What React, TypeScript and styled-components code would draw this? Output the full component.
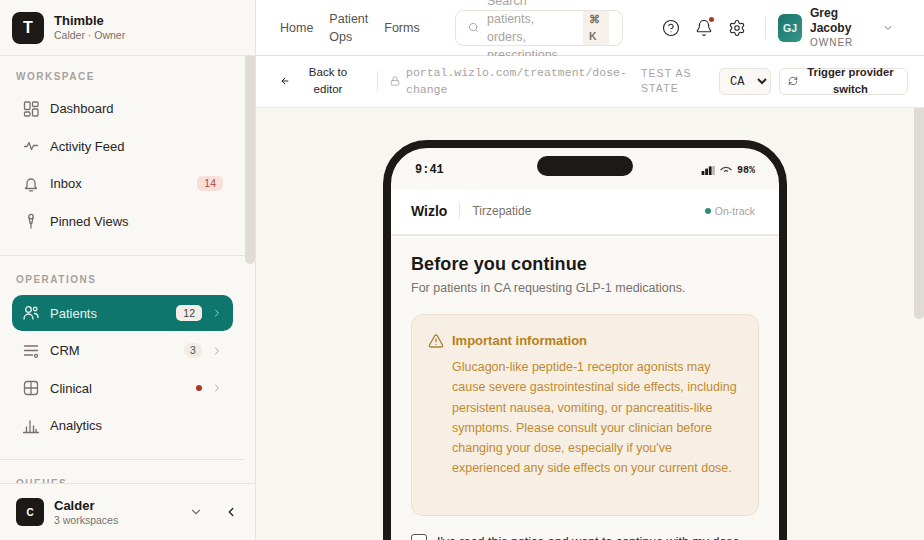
import styled, { createGlobalStyle } from 'styled-components';
import {
  AlertTriangle,
  ArrowLeft,
  Bell,
  ChevronDown,
  ChevronLeft,
  ChevronRight,
  CircleHelp,
  Lock,
  RefreshCw,
  Search,
  Settings,
} from 'lucide-react';
import type { ReactNode } from 'react';

const GlobalStyle = createGlobalStyle`
  * { box-sizing: border-box; }
  html, body { margin: 0; height: 100%; overflow: hidden; }
  body {
    font-family: 'Liberation Sans', Arial, sans-serif;
    color: #1c1917;
    background: #faf8f5;
  }
  #root { height: 100%; }
`;

const Glyph = ({ children }: { children: ReactNode }) => (
  <svg viewBox="0 0 16 16" fill="none" stroke="currentColor" strokeWidth="1.3" strokeLinecap="round" strokeLinejoin="round">
    {children}
  </svg>
);

const DashboardIcon = () => (
  <Glyph>
    <rect x="1.5" y="1" width="5.5" height="7.5" rx="1" />
    <rect x="9.5" y="1" width="5.5" height="4.5" rx="1" />
    <rect x="9.5" y="8" width="5.5" height="7" rx="1" />
    <rect x="1.5" y="11" width="5.5" height="4" rx="1" />
  </Glyph>
);

const ActivityIcon = () => (
  <Glyph>
    <path d="M1.5 8.5h2.5l2-4 2.5 7 2-4h4" />
  </Glyph>
);

const BellIcon = () => (
  <Glyph>
    <path d="M4 10.5V7a4 4 0 0 1 8 0v3.5l1.5 2h-11z" />
    <path d="M6.5 14.8h3" />
  </Glyph>
);

const PinIcon = () => (
  <Glyph>
    <circle cx="8" cy="3.6" r="2.2" />
    <path d="M6 5l1.3 5.5h1.4L10 5" />
    <path d="M8 10.5V15" />
  </Glyph>
);

const UsersIcon = () => (
  <Glyph>
    <circle cx="5.5" cy="4.5" r="2.8" />
    <circle cx="12.2" cy="4" r="1.8" />
    <path d="M1 14c0-3 2-5 4.5-5s4.5 2 4.5 5" />
    <path d="M11.5 8.5c2 0 3.5 1.5 3.5 4" />
  </Glyph>
);

const CrmIcon = () => (
  <Glyph>
    <path d="M1.5 3h13" />
    <path d="M1.5 7.5h13" />
    <path d="M1.5 12h8" />
    <circle cx="13" cy="12.8" r="1.5" />
  </Glyph>
);

const ClinicalIcon = () => (
  <Glyph>
    <rect x="1.5" y="1.5" width="13" height="13" rx="2.5" />
    <path d="M8 1.5v13" />
    <path d="M1.5 8h13" />
  </Glyph>
);

const AnalyticsIcon = () => (
  <Glyph>
    <path d="M0.5 14.5h15" />
    <path d="M3.5 14.5V9" />
    <path d="M7 14.5V3" />
    <path d="M10.5 14.5V8" />
    <path d="M13 14.5V11.5" />
  </Glyph>
);

interface NavEntry {
  label: string;
  icon: ReactNode;
  count?: string;
  tone?: 'red' | 'grey';
  dot?: boolean;
  arrow?: boolean;
  active?: boolean;
}

const workspace: NavEntry[] = [
  { label: 'Dashboard', icon: <DashboardIcon /> },
  { label: 'Activity Feed', icon: <ActivityIcon /> },
  { label: 'Inbox', icon: <BellIcon />, count: '14', tone: 'red' },
  { label: 'Pinned Views', icon: <PinIcon /> },
];

const operations: NavEntry[] = [
  { label: 'Patients', icon: <UsersIcon />, count: '12', arrow: true, active: true },
  { label: 'CRM', icon: <CrmIcon />, count: '3', tone: 'grey', arrow: true },
  { label: 'Clinical', icon: <ClinicalIcon />, dot: true, arrow: true },
  { label: 'Analytics', icon: <AnalyticsIcon /> },
];

const NavList = ({ items }: { items: NavEntry[] }) => (
  <Items>
    {items.map((item) => (
      <NavItem key={item.label} $active={item.active}>
        <NavIcon $active={item.active}>{item.icon}</NavIcon>
        <NavLabel>{item.label}</NavLabel>
        {item.count && (
          <Count $tone={item.tone} $active={item.active}>
            {item.count}
          </Count>
        )}
        {item.dot && <RedDot />}
        {item.arrow && (
          <Arrow $active={item.active}>
            <ChevronRight />
          </Arrow>
        )}
      </NavItem>
    ))}
  </Items>
);

const App = () => {
  return (
    <Shell>
      <GlobalStyle />
      <Sidebar>
        <BrandRow>
          <Logo>T</Logo>
          <div>
            <BrandName>Thimble</BrandName>
            <BrandSub>Calder · Owner</BrandSub>
          </div>
        </BrandRow>

        <NavScroll>
          <SidebarThumb />
          <Section>
            <SectionTitle>WORKSPACE</SectionTitle>
            <NavList items={workspace} />
          </Section>
          <Section>
            <SectionTitle>OPERATIONS</SectionTitle>
            <NavList items={operations} />
          </Section>
          <Section>
            <SectionTitle>QUEUES</SectionTitle>
          </Section>
        </NavScroll>

        <Footer>
          <FooterLogo>C</FooterLogo>
          <FooterText>
            <BrandName as="div">Calder</BrandName>
            <BrandSub>3 workspaces</BrandSub>
          </FooterText>
          <FooterChevron>
            <ChevronDown />
          </FooterChevron>
          <Collapse>
            <ChevronLeft />
          </Collapse>
        </Footer>
      </Sidebar>

      <Content>
        <TopBar>
          <TopNav>
            <TopLink>Home</TopLink>
            <TopLink>Patient Ops</TopLink>
            <TopLink>Forms</TopLink>
          </TopNav>
          <SearchBox>
            <Search />
            <SearchText>Search patients, orders, prescriptions...</SearchText>
            <Kbd>⌘ K</Kbd>
          </SearchBox>
          <TopActions>
            <IconButton>
              <CircleHelp />
            </IconButton>
            <IconButton>
              <Bell />
              <NotifyDot />
            </IconButton>
            <IconButton>
              <Settings />
            </IconButton>
          </TopActions>
          <UserBlock>
            <Avatar>GJ</Avatar>
            <UserText>
              <UserName>Greg Jacoby</UserName>
              <UserRole>OWNER</UserRole>
            </UserText>
            <UserChevron>
              <ChevronDown />
            </UserChevron>
          </UserBlock>
        </TopBar>

        <ToolBar>
          <BackButton>
            <ArrowLeft />
            <span>Back to editor</span>
          </BackButton>
          <UrlBlock>
            <Lock />
            <UrlText>portal.wizlo.com/treatment/dose-change</UrlText>
          </UrlBlock>
          <StateLabel>TEST AS STATE</StateLabel>
          <StateSelect defaultValue="CA">
            <option>CA</option>
            <option>NY</option>
          </StateSelect>
          <TriggerButton>
            <RefreshCw />
            <span>Trigger provider switch</span>
          </TriggerButton>
        </ToolBar>

        <Canvas>
          <CanvasThumb />
          <Phone>
            <StatusBar>
              <Clock>9:41</Clock>
              <Island />
              <StatusRight>
                <svg width="14" height="9" viewBox="0 0 14 9" fill="#1c1917">
                  <rect x="0.6" y="5" width="2.8" height="4" />
                  <rect x="4.2" y="2.6" width="2.8" height="6.4" />
                  <rect x="7.8" y="0.4" width="2.8" height="8.6" />
                  <rect x="11.2" y="0" width="2.6" height="9" opacity="0.3" />
                </svg>
                <svg width="12" height="8" viewBox="0 0 12 8" fill="none" stroke="#44403c" strokeWidth="1.2">
                  <path d="M0.6 4C3.6 0.6 8.4 0.6 11.4 4" />
                  <path d="M4 5.4C5.2 4.6 6.8 4.6 8 5.4" />
                </svg>
                <span>98%</span>
              </StatusRight>
            </StatusBar>
            <AppHeader>
              <AppBrand>Wizlo</AppBrand>
              <AppDrug>Tirzepatide</AppDrug>
              <AppStatus>On-track</AppStatus>
            </AppHeader>
            <AppBody>
              <Title>Before you continue</Title>
              <Subtitle>For patients in CA requesting GLP-1 medications.</Subtitle>
              <Notice>
                <NoticeIcon>
                  <AlertTriangle />
                </NoticeIcon>
                <div>
                  <NoticeTitle>Important information</NoticeTitle>
                  <NoticeText>
                    Glucagon-like peptide-1 receptor agonists may cause severe gastrointestinal side
                    effects, including persistent nausea, vomiting, or pancreatitis-like symptoms.
                    Please consult your clinician before changing your dose, especially if you've
                    experienced any side effects on your current dose.
                  </NoticeText>
                </div>
              </Notice>
              <Agree>
                <CheckBox />
                <span>I've read this notice and want to continue with my dose</span>
              </Agree>
            </AppBody>
          </Phone>
        </Canvas>
      </Content>
    </Shell>
  );
};

const Shell = styled.div`
  display: flex;
  height: 100vh;
  overflow: hidden;
`;

const Sidebar = styled.aside`
  width: 256px;
  flex: none;
  display: flex;
  flex-direction: column;
  background: #faf8f5;
  border-right: 1px solid #e7e3dd;
`;

const BrandRow = styled.div`
  height: 56px;
  flex: none;
  display: flex;
  align-items: center;
  gap: 10px;
  padding: 0 12px;
  border-bottom: 1px solid #e7e3dd;
`;

const Logo = styled.div`
  width: 32px;
  height: 32px;
  border-radius: 8px;
  background: #1c1917;
  color: #fff;
  font-size: 16px;
  font-weight: 700;
  display: flex;
  align-items: center;
  justify-content: center;
`;

const BrandName = styled.div`
  font-size: 13px;
  line-height: 15px;
  font-weight: 700;
  color: #1c1917;
`;

const BrandSub = styled.div`
  font-size: 10.5px;
  line-height: 13px;
  color: #78716c;
  margin-top: 1px;
`;

const NavScroll = styled.div`
  position: relative;
  flex: 1;
  min-height: 0;
  overflow: hidden;
  padding-right: 10px;
`;

const SidebarThumb = styled.div`
  position: absolute;
  top: 0;
  right: 0;
  width: 10px;
  height: 208px;
  border-radius: 0 0 5px 5px;
  background: #e0dbd5;
`;

const Section = styled.section`
  padding: 18px 12px 15px;
  border-bottom: 1px solid #e7e3dd;

  &:first-of-type {
    padding-top: 14.6px;
    padding-bottom: 15.7px;
  }

  &:first-of-type > div:first-child {
    margin-bottom: 8px;
  }

  &:last-of-type {
    border-bottom: none;
  }
`;

const SectionTitle = styled.div`
  padding-left: 4px;
  font-size: 10px;
  line-height: 12px;
  font-weight: 700;
  letter-spacing: 1.5px;
  color: #a8a29e;
  margin-bottom: 9px;
`;

const Items = styled.div`
  display: flex;
  flex-direction: column;
  gap: 1.6px;
`;

const NavItem = styled.div<{ $active?: boolean }>`
  height: 36px;
  display: flex;
  align-items: center;
  padding: 0 10px 0 11px;
  border-radius: 10px;
  font-size: 13px;
  color: ${(p) => (p.$active ? '#e6f5f1' : '#292524')};
  background: ${(p) => (p.$active ? '#0f766e' : 'transparent')};
`;

const NavIcon = styled.span<{ $active?: boolean }>`
  width: 16px;
  height: 16px;
  margin-right: 11px;
  color: ${(p) => (p.$active ? '#e6f5f1' : '#78716c')};

  svg {
    display: block;
    width: 16px;
    height: 16px;
  }
`;

const NavLabel = styled.span`
  flex: 1;
`;

const Count = styled.span<{ $tone?: 'red' | 'grey'; $active?: boolean }>`
  min-width: 18px;
  height: ${(p) => (p.$active ? 16 : 15)}px;
  padding: 0 ${(p) => (p.$tone === 'grey' ? 5 : 7)}px;
  border-radius: ${(p) => (p.$tone === 'grey' ? 8 : 5)}px;
  font-size: 10.5px;
  line-height: ${(p) => (p.$active ? 16 : 15)}px;
  text-align: center;
  background: ${(p) => (p.$active ? '#f3eee8' : p.$tone === 'red' ? '#f9dfda' : '#f0ece6')};
  color: ${(p) => (p.$active ? '#44403c' : p.$tone === 'red' ? '#b5453a' : '#57534e')};
`;

const RedDot = styled.span`
  width: 6px;
  height: 6px;
  border-radius: 50%;
  background: #b5342a;
`;

const Arrow = styled.span<{ $active?: boolean }>`
  width: 12px;
  height: 12px;
  margin-left: 9px;
  color: ${(p) => (p.$active ? '#a7d8cf' : '#a8a29e')};

  svg {
    display: block;
    width: 12px;
    height: 12px;
  }
`;

const Footer = styled.div`
  height: 57px;
  flex: none;
  display: flex;
  align-items: center;
  padding: 0 17px 0 16px;
  gap: 10px;
  border-top: 1px solid #e7e3dd;
  background: #faf8f5;
`;

const FooterLogo = styled.div`
  width: 28px;
  height: 28px;
  border-radius: 6px;
  background: #1c1917;
  color: #fff;
  font-size: 10px;
  font-weight: 700;
  display: flex;
  align-items: center;
  justify-content: center;
`;

const FooterText = styled.div`
  flex: 1;
`;

const FooterChevron = styled.span`
  width: 14px;
  height: 14px;
  margin-right: 11px;
  color: #78716c;

  svg {
    display: block;
    width: 14px;
    height: 14px;
  }
`;

const Collapse = styled.span`
  width: 14px;
  height: 14px;
  color: #292524;

  svg {
    display: block;
    width: 14px;
    height: 14px;
    stroke-width: 2.4;
  }
`;

const Content = styled.main`
  flex: 1;
  min-width: 0;
  display: flex;
  flex-direction: column;
  background: #fff;
`;

const TopBar = styled.header`
  height: 56px;
  flex: none;
  display: flex;
  align-items: center;
  padding: 0 16px 0 24px;
  background: #fff;
  border-bottom: 1px solid #e7e3dd;
`;

const TopNav = styled.nav`
  display: flex;
  align-items: center;
  gap: 16px;
  width: 175px;
  flex: none;
`;

const TopLink = styled.a`
  width: min-content;
  font-size: 12.5px;
  line-height: 18px;
  color: #57534e;
`;

const SearchBox = styled.div`
  width: 168px;
  height: 36px;
  flex: none;
  display: flex;
  align-items: center;
  padding-left: 12px;
  border: 1px solid #e7e3dd;
  border-radius: 8px;
  color: #a8a29e;

  > svg {
    width: 11px;
    height: 11px;
    flex: none;
    margin-right: 8px;
  }
`;

const SearchText = styled.span`
  width: 84px;
  flex: none;
  font-size: 12.5px;
  line-height: 18px;
  color: #a8a29e;
`;

const Kbd = styled.span`
  width: 26px;
  height: 34px;
  flex: none;
  margin-left: auto;
  margin-right: 13px;
  padding-left: 6px;
  background: #f5f1ea;
  font-size: 10.5px;
  line-height: 17px;
  font-weight: 700;
  color: #78716c;
`;

const TopActions = styled.div`
  display: flex;
  align-items: center;
  gap: 15px;
  margin-left: 39px;
  padding-right: 19px;
  margin-right: 12px;
  border-right: 1px solid #e7e3dd;
  height: 22px;
`;

const IconButton = styled.span`
  position: relative;
  width: 18px;
  height: 18px;
  color: #292524;

  svg {
    display: block;
    width: 18px;
    height: 18px;
    stroke-width: 1.5;
  }
`;

const NotifyDot = styled.span`
  position: absolute;
  top: -2px;
  right: -1px;
  width: 5px;
  height: 5px;
  border-radius: 50%;
  background: #b5342a;
`;

const UserBlock = styled.div`
  display: flex;
  align-items: center;
  flex: none;
`;

const Avatar = styled.div`
  width: 24px;
  height: 28px;
  border-radius: 6px;
  background: linear-gradient(135deg, #17756d, #3a9488);
  color: #e6f5f1;
  font-size: 10.5px;
  font-weight: 700;
  display: flex;
  align-items: center;
  justify-content: center;
  margin-right: 8px;
`;

const UserText = styled.div`
  width: 60px;
`;

const UserName = styled.div`
  font-size: 12px;
  line-height: 15px;
  font-weight: 700;
  color: #292524;
`;

const UserRole = styled.div`
  font-size: 10px;
  line-height: 13px;
  letter-spacing: 1px;
  color: #78716c;
`;

const UserChevron = styled.span`
  width: 12px;
  height: 12px;
  margin-left: 12px;
  color: #78716c;

  svg {
    display: block;
    width: 12px;
    height: 12px;
  }
`;

const ToolBar = styled.div`
  height: 52px;
  flex: none;
  display: flex;
  align-items: center;
  padding: 0 16px 2px 24px;
  background: #fff;
  border-bottom: 1px solid #ece8e2;
`;

const BackButton = styled.div`
  display: flex;
  align-items: center;
  flex: none;
  width: 98px;
  height: 20px;
  border-right: 1px solid #e7e3dd;
  padding-right: 17px;
  font-size: 11.5px;
  line-height: 17px;
  color: #292524;
  text-align: center;

  svg {
    width: 10px;
    height: 10px;
    flex: none;
    stroke-width: 2.4;
    margin-right: 6px;
  }

  span {
    flex: 1;
    padding: 0 8px;
  }
`;

const UrlBlock = styled.div`
  width: 263px;
  flex: none;
  display: flex;
  align-items: center;
  padding-left: 12px;
  color: #a8a29e;

  svg {
    width: 10px;
    height: 10px;
    flex: none;
    margin-right: 6px;
  }
`;

const UrlText = styled.span`
  width: 226px;
  flex: none;
  font-family: 'Liberation Mono', monospace;
  font-size: 11.5px;
  line-height: 17px;
  overflow-wrap: break-word;
`;

const StateLabel = styled.span`
  width: 78px;
  flex: none;
  font-size: 10.5px;
  line-height: 15px;
  letter-spacing: 1.1px;
  color: #a8a29e;
`;

const StateSelect = styled.select`
  width: 52px;
  height: 27px;
  flex: none;
  margin: 2px 8px 0 0;
  border: 1px solid #e7e3dd;
  border-radius: 6px;
  background: #faf8f5;
  font-family: 'Liberation Mono', monospace;
  font-size: 12px;
  color: #292524;
  padding-left: 6px;
`;

const TriggerButton = styled.div`
  width: 129px;
  height: 27px;
  flex: none;
  margin-top: 2px;
  display: flex;
  align-items: center;
  padding: 0 8px 2px;
  border: 1px solid #e7e3dd;
  border-radius: 6px;
  font-size: 11.25px;
  line-height: 17px;
  font-weight: 700;
  text-align: center;
  color: #292524;

  svg {
    width: 10px;
    height: 10px;
    flex: none;
    margin-right: 4px;
    color: #57534e;
  }

  span {
    flex: 1;
  }
`;

const Canvas = styled.div`
  position: relative;
  flex: 1;
  min-height: 0;
  overflow: hidden;
  background: #f7f6f1;
  padding: 32px 10px 0 0;
  display: flex;
  flex-direction: column;
  align-items: center;
`;

const CanvasThumb = styled.div`
  position: absolute;
  top: 0;
  right: 0;
  width: 10px;
  height: 211px;
  border-radius: 0 0 5px 5px;
  background: #e0dbd5;
`;

const Phone = styled.div`
  width: 404px;
  flex: none;
  border: 8px solid #1c1917;
  border-radius: 44px;
  background: #faf8f5;
  overflow: hidden;
`;

const StatusBar = styled.div`
  height: 42px;
  display: flex;
  align-items: center;
  position: relative;
  padding: 0 24px;
  justify-content: space-between;
`;

const Clock = styled.span`
  font-family: 'Liberation Mono', monospace;
  font-size: 12px;
  font-weight: 700;
  margin-top: 2px;
`;

const Island = styled.span`
  position: absolute;
  left: 146px;
  top: 8px;
  width: 96px;
  height: 20px;
  border-radius: 10px;
  background: #1c1917;
`;

const StatusRight = styled.span`
  display: flex;
  align-items: center;
  gap: 5px;
  font-family: 'Liberation Mono', monospace;
  font-size: 10px;
  font-weight: 700;
  margin-top: 2px;
`;

const AppHeader = styled.div`
  height: 46px;
  display: flex;
  align-items: center;
  padding: 0 24px 2px 20px;
  background: #fff;
  border-bottom: 2px solid #ebe8e3;
`;

const AppBrand = styled.span`
  font-size: 14px;
  font-weight: 700;
  padding-right: 12px;
  border-right: 1px solid #e7e3dd;
  line-height: 16px;
`;

const AppDrug = styled.span`
  flex: 1;
  padding-left: 12px;
  font-size: 12px;
  color: #78716c;
`;

const AppStatus = styled.span`
  display: flex;
  align-items: center;
  gap: 4px;
  font-size: 10.5px;
  color: #a8a29e;

  &::before {
    content: '';
    width: 6px;
    height: 6px;
    border-radius: 50%;
    background: #2f8f76;
  }
`;

const AppBody = styled.div`
  padding: 17px 20px 28px;
`;

const Title = styled.h1`
  margin: 0;
  font-size: 18px;
  line-height: 22px;
  font-weight: 700;
  letter-spacing: 0.1px;
  color: #1c1917;
`;

const Subtitle = styled.p`
  margin: 5px 0 18px;
  font-size: 12.5px;
  line-height: 16px;
  color: #78716c;
`;

const Notice = styled.div`
  display: flex;
  min-height: 202px;
  padding: 17px 16px 0;
  border: 1px solid #ecdfcc;
  border-radius: 12px;
  background: #f7efe3;
`;

const NoticeIcon = styled.span`
  width: 16px;
  height: 16px;
  flex: none;
  margin-right: 8px;
  color: #a9823f;

  svg {
    display: block;
    width: 16px;
    height: 16px;
    margin-top: 1px;
  }
`;

const NoticeTitle = styled.div`
  font-size: 13px;
  line-height: 18px;
  font-weight: 700;
  color: #b57f1f;
`;

const NoticeText = styled.p`
  margin: 7px 0 0;
  font-size: 12.5px;
  line-height: 20.3px;
  color: #c08a32;
`;

const Agree = styled.label`
  display: flex;
  gap: 10px;
  margin-top: 18px;
  font-size: 12.5px;
  line-height: 17px;
  color: #292524;
`;

const CheckBox = styled.span`
  width: 16px;
  height: 16px;
  flex: none;
  border: 1px solid #57534e;
  border-radius: 3px;
  background: #fff;
`;

export default App;
